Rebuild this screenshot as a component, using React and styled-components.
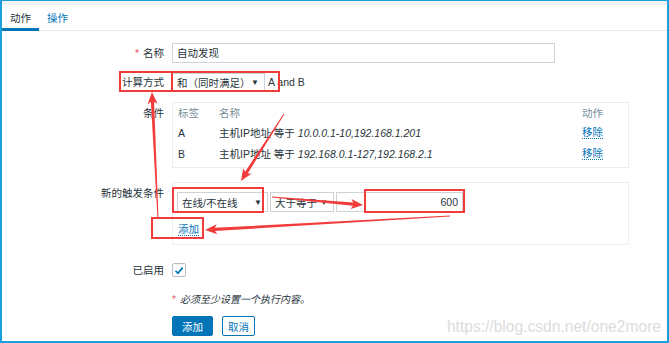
import React from "react";
import styled, { createGlobalStyle } from "styled-components";

const GlobalStyle = createGlobalStyle`
  body {
    margin: 0;
    background: #ffffff;
  }
`;

const FONT = `"Liberation Sans", "Noto Sans CJK SC", sans-serif`;

const Frame = styled.div`
  position: relative;
  width: 669px;
  height: 343px;
  box-sizing: border-box;
  border: 2px solid #1a9fdf;
  border-top-width: 1px;
  background: #ffffff;
  font-family: ${FONT};
  font-size: 10.5px;
  color: #27343b;
  overflow: hidden;
`;

const TopStrip = styled.div`
  height: 4px;
  background: #f2f2f2;
`;

const TabBar = styled.div`
  display: flex;
  height: 25px;
  border-bottom: 1px solid #e8e8e8;
`;

const Tab = styled.div`
  display: flex;
  align-items: center;
  padding: 2px 8px 0;
  color: ${(p) => (p.$active ? "#27343b" : "#0275b8")};
  border-bottom: 3px solid ${(p) => (p.$active ? "#0275b8" : "transparent")};
  margin-bottom: -1px;
`;

const Form = styled.div`
  padding-top: 12px;
`;

const Row = styled.div`
  display: grid;
  grid-template-columns: 162px 1fr;
  column-gap: 8px;
  align-items: ${(p) => p.$align || "center"};
  margin-bottom: ${(p) => p.$mb || 0}px;
`;

const Label = styled.div`
  text-align: right;
  line-height: 20px;
  padding-top: ${(p) => p.$pt || 0}px;
  white-space: nowrap;
`;

const Star = styled.span`
  color: #e45959;
  margin-right: 4px;
  font-style: normal;
`;

const TextInput = styled.div`
  box-sizing: border-box;
  width: ${(p) => p.$w}px;
  height: 20px;
  border: 1px solid #cdd3d6;
  padding: 0 4px;
  line-height: 18px;
  text-align: ${(p) => p.$align || "left"};
  background: #fff;
`;

const Inline = styled.div`
  display: flex;
  align-items: center;
  gap: ${(p) => p.$gap || 0}px;
`;

const Select = styled.div`
  box-sizing: border-box;
  display: flex;
  align-items: center;
  justify-content: space-between;
  width: ${(p) => p.$w}px;
  height: ${(p) => p.$h || 20}px;
  border: 1px solid #cdd3d6;
  padding: 0 5px 0 4px;
  background: #fff;
  white-space: nowrap;
`;

const Caret = styled.span`
  font-size: 8px;
  color: #27343b;
`;

const Hint = styled.span`
  margin-left: 3px;
`;

const Box = styled.div`
  box-sizing: border-box;
  width: 457px;
  height: ${(p) => p.$h}px;
  border: 1px solid #ebeef0;
  padding: ${(p) => p.$pad};
`;

const CondGrid = styled.div`
  display: grid;
  grid-template-columns: 41px 1fr 46px;
`;

const Cell = styled.div`
  height: ${(p) => p.$h}px;
  display: flex;
  align-items: center;
  color: ${(p) => (p.$head ? "#768d99" : "#27343b")};
  white-space: nowrap;
`;

const Value = styled.i`
  margin-left: 3px;
`;

const Link = styled.span`
  color: #0275b8;
  border-bottom: 1px dotted #0275b8;
  line-height: 12px;
`;

const AddLink = styled(Link)`
  display: inline-block;
  margin-top: 11px;
  margin-left: 1px;
`;

const Check = styled.div`
  box-sizing: border-box;
  width: 14px;
  height: 14px;
  border: 1px solid #b5bfc4;
  border-radius: 2px;
  display: flex;
  align-items: center;
  justify-content: center;
`;

const Note = styled.div`
  font-size: 10px;
  line-height: 14px;
  font-style: italic;
`;

const Buttons = styled.div`
  display: flex;
  gap: 9px;
`;

const Button = styled.div`
  box-sizing: border-box;
  height: 20px;
  padding: 0 ${(p) => p.$px}px;
  display: flex;
  align-items: center;
  border: 1px solid #0275b8;
  border-radius: 2px;
  background: ${(p) => (p.$primary ? "#0275b8" : "#fff")};
  color: ${(p) => (p.$primary ? "#fff" : "#0275b8")};
`;

const Watermark = styled.div`
  position: absolute;
  right: 6px;
  bottom: 5px;
  font-family: "Liberation Sans", sans-serif;
  font-size: 15.6px;
  color: #dcdcdc;
`;

const Overlay = styled.svg`
  position: absolute;
  left: -2px;
  top: -1px;
  width: 669px;
  height: 343px;
  pointer-events: none;
`;

const RED = "#f23c3c";

function arrow(x1, y1, x2, y2) {
  const dx = x2 - x1;
  const dy = y2 - y1;
  const l = Math.hypot(dx, dy);
  const ux = dx / l;
  const uy = dy / l;
  const nx = -uy;
  const ny = ux;
  const tail = 0.5;
  const neck = 1.6;
  const head = 5;
  const len = 10;
  const bx = x2 - ux * len;
  const by = y2 - uy * len;
  const hx = x2 - ux * (len + 2);
  const hy = y2 - uy * (len + 2);
  const pts = [
    [x1 + nx * tail, y1 + ny * tail],
    [bx + nx * neck, by + ny * neck],
    [hx + nx * head, hy + ny * head],
    [x2, y2],
    [hx - nx * head, hy - ny * head],
    [bx - nx * neck, by - ny * neck],
    [x1 - nx * tail, y1 - ny * tail],
  ];
  return pts.map((p) => p.map((v) => v.toFixed(1)).join(",")).join(" ");
}

const boxes = [
  [120, 72, 52, 19],
  [172, 72, 107, 19],
  [173, 188, 90, 24],
  [365, 190, 99, 22],
  [152, 218, 51, 20],
];

const arrows = [
  [158, 218, 152, 92],
  [284, 114, 241, 181],
  [272, 197, 363, 205],
  [450, 216, 205, 230],
];

const conditions = [
  { tag: "A", value: "10.0.0.1-10,192.168.1.201" },
  { tag: "B", value: "192.168.0.1-127,192.168.2.1" },
];

const App = () => {
  return (
    <>
      <GlobalStyle />
      <Frame>
        <TopStrip />
        <TabBar>
          <Tab $active>动作</Tab>
          <Tab>操作</Tab>
        </TabBar>
        <Form>
          <Row $mb={9}>
            <Label>
              <Star>*</Star>名称
            </Label>
            <TextInput $w={383}>自动发现</TextInput>
          </Row>
          <Row $mb={10}>
            <Label>计算方式</Label>
            <Inline>
              <Select $w={93} $h={18}>
                和（同时满足）<Caret>▼</Caret>
              </Select>
              <Hint>A and B</Hint>
            </Inline>
          </Row>
          <Row $align="start" $mb={14}>
            <Label $pt={1}>条件</Label>
            <Box $h={66} $pad="0 0 0 5px">
              <CondGrid>
                <Cell $head $h={19}>标签</Cell>
                <Cell $head $h={19}>名称</Cell>
                <Cell $head $h={19}>动作</Cell>
                {conditions.map((c) => (
                  <React.Fragment key={c.tag}>
                    <Cell $h={21}>{c.tag}</Cell>
                    <Cell $h={21}>
                      主机IP地址 等于<Value>{c.value}</Value>
                    </Cell>
                    <Cell $h={21}>
                      <Link>移除</Link>
                    </Cell>
                  </React.Fragment>
                ))}
              </CondGrid>
            </Box>
          </Row>
          <Row $align="start" $mb={15}>
            <Label $pt={1}>新的触发条件</Label>
            <Box $h={63} $pad="9px 5px 0 4px">
              <Inline $gap={2}>
                <Select $w={91}>
                  在线/不在线<Caret>▼</Caret>
                </Select>
                <Select $w={64}>
                  大于等于<Caret>▼</Caret>
                </Select>
                <TextInput $w={127} $align="right">600</TextInput>
              </Inline>
              <AddLink>添加</AddLink>
            </Box>
          </Row>
          <Row $mb={13}>
            <Label>已启用</Label>
            <Check>
              <svg width="10" height="9" viewBox="0 0 10 9">
                <path d="M1.5 4.8 L4 7.2 L8.6 1.6" fill="none" stroke="#0275b8" strokeWidth="1.8" />
              </svg>
            </Check>
          </Row>
          <Row $mb={9}>
            <div />
            <Note>
              <Star>*</Star>必须至少设置一个执行内容。
            </Note>
          </Row>
          <Row>
            <div />
            <Buttons>
              <Button $primary $px={9}>添加</Button>
              <Button $px={5}>取消</Button>
            </Buttons>
          </Row>
        </Form>
        <Watermark>https://blog.csdn.net/one2more</Watermark>
        <Overlay viewBox="0 0 669 343">
          {boxes.map(([x, y, w, h], i) => (
            <rect key={i} x={x} y={y} width={w} height={h} fill="none" stroke={RED} strokeWidth="2" />
          ))}
          {arrows.map(([a, b, c, d], i) => (
            <polygon key={i} points={arrow(a, b, c, d)} fill={RED} />
          ))}
        </Overlay>
      </Frame>
    </>
  );
};

export default App;
